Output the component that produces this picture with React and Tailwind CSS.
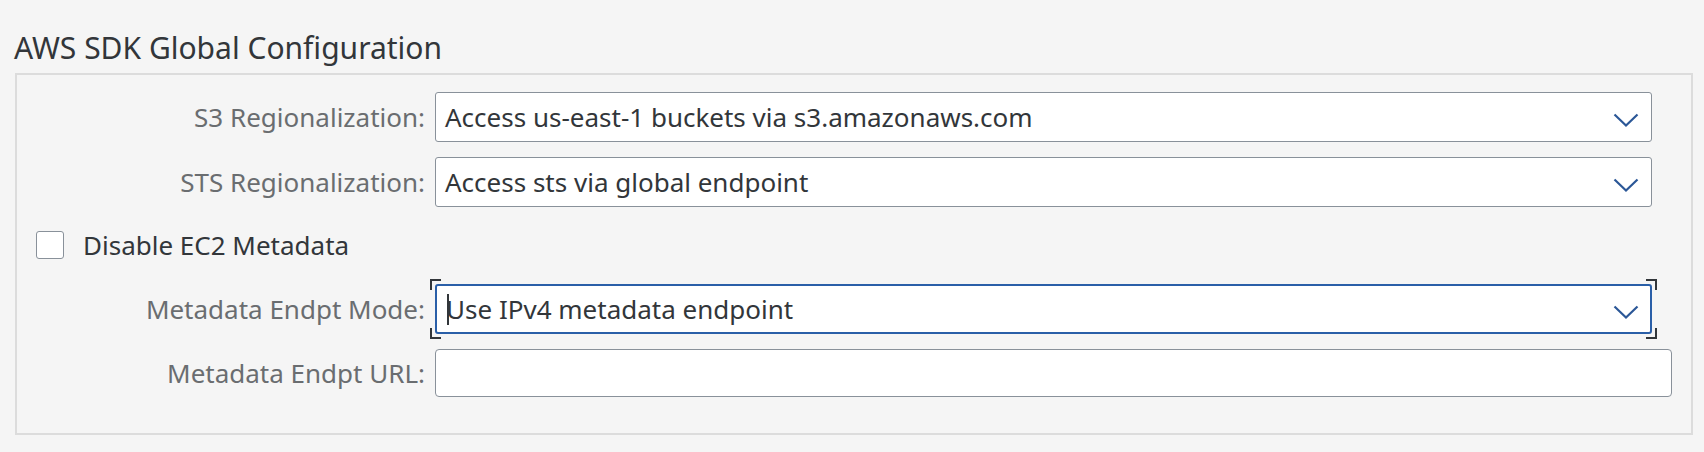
const font = { fontFamily: '"Noto Sans", "Open Sans", Arial, sans-serif' }

const Chevron = () => (
  <svg width="26" height="15" viewBox="0 0 26 15" fill="none" className="shrink-0 mt-[6px]">
    <path d="M1.5 1.5 L13 12.5 L24.5 1.5" stroke="#2b5797" strokeWidth="2.2" />
  </svg>
)

const Corner = ({ className }) => <span className={`absolute w-[11px] h-[11px] border-[#32363a] ${className}`} />

const SelectBox = ({ value, focused }) => (
  <div className="relative">
    {focused && (
      <>
        <Corner className="-left-[5px] -top-[5px] border-l-2 border-t-2" />
        <Corner className="-right-[5px] -top-[5px] border-r-2 border-t-2" />
        <Corner className="-left-[5px] -bottom-[5px] border-l-2 border-b-2" />
        <Corner className="-right-[5px] -bottom-[5px] border-r-2 border-b-2" />
      </>
    )}
    <div
      className={`w-[1217px] h-[50px] bg-white flex items-center justify-between rounded-[3px] ${
        focused ? "border-2 border-[#2a5fa8] pl-[9px] pr-[11px]" : "border border-[#89919a] pl-[9px] pr-[12px]"
      }`}
    >
      <span className="relative text-[26px] leading-[34px] text-[#32363a]">
        {focused && <span className="absolute left-[1px] top-[2px] w-[2px] h-[31px] bg-[#32363a]" />}
        {value}
      </span>
      <Chevron />
    </div>
  </div>
)

const Row = ({ label, children }) => (
  <div className="flex items-center">
    <div className="w-[418px] text-right text-[26px] leading-[34px] text-[#6a6d70] pr-[10px]">{label}</div>
    {children}
  </div>
)

export default function App() {
  return (
    <div className="w-[1704px] h-[452px] bg-[#f5f5f5] pt-[28px]" style={font}>
      <h2 className="ml-[14px] text-[30px] text-[#32363a] leading-[40px] mb-[5px]">AWS SDK Global Configuration</h2>
      <div className="ml-[15px] w-[1678px] h-[362px] border-2 border-[#dcdcdc] pt-[17px]">
        <div className="flex flex-col">
          <Row label="S3 Regionalization:">
            <SelectBox value="Access us-east-1 buckets via s3.amazonaws.com" />
          </Row>
          <div className="h-[15px]" />
          <Row label="STS Regionalization:">
            <SelectBox value="Access sts via global endpoint" />
          </Row>
          <div className="flex items-center mt-[21px] ml-[19px]">
            <div className="w-[28px] h-[28px] bg-white border border-[#89919a] rounded-[3px]" />
            <span className="ml-[19px] text-[26px] leading-[34px] text-[#32363a]">Disable EC2 Metadata</span>
          </div>
          <div className="h-[22px]" />
          <Row label="Metadata Endpt Mode:">
            <SelectBox value="Use IPv4 metadata endpoint" focused />
          </Row>
          <div className="h-[15px]" />
          <Row label="Metadata Endpt URL:">
            <div className="w-[1237px] h-[48px] bg-white border border-[#89919a] rounded-[4px]" />
          </Row>
        </div>
      </div>
    </div>
  )
}
